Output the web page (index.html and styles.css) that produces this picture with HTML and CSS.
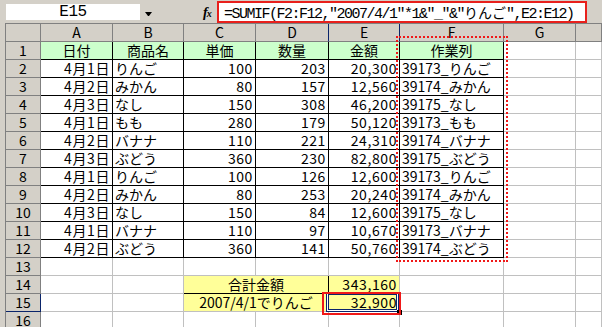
FILE: index.html
```html
<!DOCTYPE html>
<html>
<head>
<meta charset="utf-8">
<link rel="stylesheet" href="styles.css">
</head>
<body>
<div class="app">
  <div class="toolbar">
    <div class="namebox mono">E15</div>
    <div class="dd"></div>
    <div class="fx"><span class="fx-f">f</span><span class="fx-x">x</span></div>
    <div class="formula mono">=SUMIF(F2:F12,"2007/4/1"*1&amp;"_"&amp;"<span class="jp">りんご</span>",E2:E12)</div>
  </div>
  <div class="sheet">
    <div class="h"></div><div class="h">A</div><div class="h">B</div><div class="h">C</div><div class="h">D</div><div class="h sel-col">E</div><div class="h">F</div><div class="h">G</div><div class="h"></div>

    <div class="r">1</div><div class="c b g ctr">日付</div><div class="c b g ctr">商品名</div><div class="c b g ctr">単価</div><div class="c b g ctr">数量</div><div class="c b g ctr">金額</div><div class="c b g ctr">作業列</div><div class="c"></div><div class="c"></div>

    <div class="r">2</div><div class="c b num">4月1日</div><div class="c b">りんご</div><div class="c b num">100</div><div class="c b num">203</div><div class="c b num">20,300</div><div class="c b">39173_りんご</div><div class="c"></div><div class="c"></div>
    <div class="r">3</div><div class="c b num">4月2日</div><div class="c b">みかん</div><div class="c b num">80</div><div class="c b num">157</div><div class="c b num">12,560</div><div class="c b">39174_みかん</div><div class="c"></div><div class="c"></div>
    <div class="r">4</div><div class="c b num">4月3日</div><div class="c b">なし</div><div class="c b num">150</div><div class="c b num">308</div><div class="c b num">46,200</div><div class="c b">39175_なし</div><div class="c"></div><div class="c"></div>
    <div class="r">5</div><div class="c b num">4月1日</div><div class="c b">もも</div><div class="c b num">280</div><div class="c b num">179</div><div class="c b num">50,120</div><div class="c b">39173_もも</div><div class="c"></div><div class="c"></div>
    <div class="r">6</div><div class="c b num">4月2日</div><div class="c b">バナナ</div><div class="c b num">110</div><div class="c b num">221</div><div class="c b num">24,310</div><div class="c b">39174_バナナ</div><div class="c"></div><div class="c"></div>
    <div class="r">7</div><div class="c b num">4月3日</div><div class="c b">ぶどう</div><div class="c b num">360</div><div class="c b num">230</div><div class="c b num">82,800</div><div class="c b">39175_ぶどう</div><div class="c"></div><div class="c"></div>
    <div class="r">8</div><div class="c b num">4月1日</div><div class="c b">りんご</div><div class="c b num">100</div><div class="c b num">126</div><div class="c b num">12,600</div><div class="c b">39173_りんご</div><div class="c"></div><div class="c"></div>
    <div class="r">9</div><div class="c b num">4月2日</div><div class="c b">みかん</div><div class="c b num">80</div><div class="c b num">253</div><div class="c b num">20,240</div><div class="c b">39174_みかん</div><div class="c"></div><div class="c"></div>
    <div class="r">10</div><div class="c b num">4月3日</div><div class="c b">なし</div><div class="c b num">150</div><div class="c b num">84</div><div class="c b num">12,600</div><div class="c b">39175_なし</div><div class="c"></div><div class="c"></div>
    <div class="r">11</div><div class="c b num">4月1日</div><div class="c b">バナナ</div><div class="c b num">110</div><div class="c b num">97</div><div class="c b num">10,670</div><div class="c b">39173_バナナ</div><div class="c"></div><div class="c"></div>
    <div class="r">12</div><div class="c b num">4月2日</div><div class="c b">ぶどう</div><div class="c b num">360</div><div class="c b num">141</div><div class="c b num">50,760</div><div class="c b">39174_ぶどう</div><div class="c"></div><div class="c"></div>

    <div class="r">13</div><div class="c"></div><div class="c"></div><div class="c"></div><div class="c"></div><div class="c"></div><div class="c"></div><div class="c"></div><div class="c"></div>
    <div class="r">14</div><div class="c"></div><div class="c"></div><div class="c y ctr span2 yb yr">合計金額</div><div class="c y num yb">343,160</div><div class="c"></div><div class="c"></div><div class="c"></div>
    <div class="r sel-row">15</div><div class="c"></div><div class="c"></div><div class="c y ctr span2 yr">2007/4/1でりんご</div><div class="c y num">32,900</div><div class="c"></div><div class="c"></div><div class="c"></div>
    <div class="r">16</div><div class="c"></div><div class="c"></div><div class="c"></div><div class="c"></div><div class="c"></div><div class="c"></div><div class="c"></div><div class="c"></div>
  </div>
  <div class="marquee"></div>
  <div class="selection"></div>
  <div class="fill-handle"></div>
  <div class="annot"></div>
</div>
</body>
</html>
```

FILE: styles.css
```css
html, body {
  margin: 0;
  padding: 0;
  background: #d4d0c8;
}

.app {
  position: relative;
  width: 602px;
  height: 327px;
  overflow: hidden;
  background: #d4d0c8;
  font-family: "Noto Sans CJK JP", sans-serif;
  color: #000;
}

.toolbar {
  height: 23px;
  display: flex;
  align-items: flex-start;
}

.mono {
  font-family: "Liberation Mono", "Noto Sans CJK JP", monospace;
  font-size: 15px;
  letter-spacing: -1.5px;
}

.namebox {
  margin: 4px 0 0 6px;
  width: 134px;
  height: 16px;
  background: #fff;
  text-align: center;
  line-height: 17px;
  font-size: 16px;
  letter-spacing: -0.5px;
}

.dd {
  margin: 12px 0 0 5px;
  width: 1px;
  height: 0;
  border-left: 3px solid transparent;
  border-right: 3px solid transparent;
  border-top: 4px solid #000;
}

.fx {
  margin: 6px 0 0 51px;
  width: 12px;
  height: 14px;
  font-family: "Liberation Serif", serif;
  font-style: italic;
  line-height: 14px;
  display: flex;
  align-items: baseline;
}

.fx-f {
  font-size: 14px;
  font-weight: bold;
}

.fx-x {
  font-size: 10px;
  font-weight: bold;
  margin-left: -1px;
}

.formula {
  margin: 1px 0 0 2px;
  width: 370px;
  height: 22px;
  box-sizing: border-box;
  border: 2px solid #e8201c;
  background: #fff;
  padding-left: 5px;
  line-height: 19px;
  white-space: nowrap;
}

.jp {
  font-family: "Noto Sans CJK JP", sans-serif;
  font-size: 14px;
  letter-spacing: 0;
}

.sheet {
  margin-left: 5px;
  border-top: 1px solid #808080;
  border-left: 1px solid #808080;
  display: grid;
  grid-template-columns: 35px 72px 71px 72px 73px 71px 104px 72px 1fr;
  grid-auto-rows: 18px;
  font-size: 14px;
  background: #fff;
}

.h, .r {
  background: #d4d0c8;
  border-right: 1px solid #808080;
  border-bottom: 1px solid #808080;
  text-align: center;
  line-height: 17px;
  font-size: 14px;
}

.sel-col {
  border-left: 1px solid #0a246a;
  border-right-color: #0a246a;
  margin-left: -1px;
}

.sel-row {
  border-right-color: #0a246a;
  border-bottom-color: #0a246a;
}

.c {
  background: #fff;
  border-right: 1px solid #c0c0c0;
  border-bottom: 1px solid #c0c0c0;
  line-height: 17px;
  padding: 0 2px;
  white-space: nowrap;
}

.b {
  border-right-color: #000;
  border-bottom-color: #000;
}

.g {
  background: #ccffcc;
}

.y {
  background: #ffff99;
}

.yb {
  border-bottom-color: #000;
}

.yr {
  border-right-color: #000;
}

.span2 {
  grid-column: span 2;
}

.ctr {
  text-align: center;
}

.num {
  text-align: right;
  letter-spacing: 0.6px;
}

.marquee {
  position: absolute;
  left: 396px;
  top: 36px;
  width: 108px;
  height: 222px;
  border: 2px dotted #f01818;
}

.selection {
  position: absolute;
  left: 326px;
  top: 292px;
  width: 71px;
  height: 18px;
  border: 1px solid #0a246a;
  box-shadow: inset 0 0 0 1px #ffffff, inset 0 0 0 2px #0a246a;
}

.fill-handle {
  position: absolute;
  left: 397px;
  top: 310px;
  width: 5px;
  height: 5px;
  background: #000;
}

.annot {
  position: absolute;
  left: 322px;
  top: 292px;
  width: 75px;
  height: 19px;
  border: 2px solid #f01818;
}
```
